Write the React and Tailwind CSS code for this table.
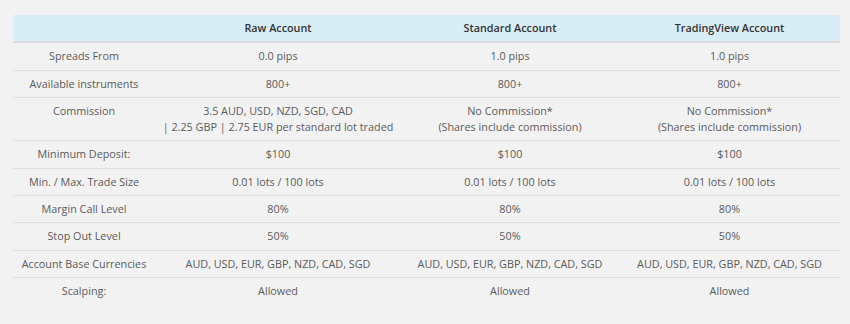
import React from "react";

const rows = [
  ["Spreads From", "0.0 pips", "1.0 pips", "1.0 pips"],
  ["Available instruments", "800+", "800+", "800+"],
  [
    "Commission",
    ["3.5 AUD, USD, NZD, SGD, CAD", "| 2.25 GBP | 2.75 EUR per standard lot traded"],
    ["No Commission*", "(Shares include commission)"],
    ["No Commission*", "(Shares include commission)"],
  ],
  ["Minimum Deposit:", "$100", "$100", "$100"],
  ["Min. / Max. Trade Size", "0.01 lots / 100 lots", "0.01 lots / 100 lots", "0.01 lots / 100 lots"],
  ["Margin Call Level", "80%", "80%", "80%"],
  ["Stop Out Level", "50%", "50%", "50%"],
  [
    "Account Base Currencies",
    "AUD, USD, EUR, GBP, NZD, CAD, SGD",
    "AUD, USD, EUR, GBP, NZD, CAD, SGD",
    "AUD, USD, EUR, GBP, NZD, CAD, SGD",
  ],
  ["Scalping:", "Allowed", "Allowed", "Allowed"],
];

function Cell({ value }) {
  if (Array.isArray(value)) {
    return (
      <>
        {value.map((line, i) => (
          <div key={i}>{line}</div>
        ))}
      </>
    );
  }
  return value;
}

export default function App() {
  return (
    <div
      className="min-h-[324px] w-[850px] bg-[#f2f2f2] pt-[15px] pl-[13px]"
      style={{ fontFamily: '"Open Sans", "Liberation Sans", sans-serif' }}
    >
      <table className="table-fixed w-[827px] border-collapse text-[10.8px] leading-[16.3px] text-[#5a5a5a]">
        <colgroup>
          <col className="w-[142px]" />
          <col className="w-[246px]" />
          <col className="w-[218px]" />
          <col className="w-[221px]" />
        </colgroup>
        <thead>
          <tr className="bg-[#d9edf7] border-b-2 border-[#dddddd]">
            <th className="py-[5px]" />
            <th className="py-[5px] font-semibold text-[#333]">Raw Account</th>
            <th className="py-[5px] font-semibold text-[#333]">Standard Account</th>
            <th className="py-[5px] font-semibold text-[#333]">TradingView Account</th>
          </tr>
        </thead>
        <tbody>
          {rows.map((row, i) => (
            <tr key={i} className={i > 0 ? "border-t border-[#dddddd]" : ""}>
              {row.map((value, j) => (
                <td key={j} className="py-[5px] px-1 text-center align-top whitespace-nowrap">
                  <Cell value={value} />
                </td>
              ))}
            </tr>
          ))}
        </tbody>
      </table>
    </div>
  );
}
